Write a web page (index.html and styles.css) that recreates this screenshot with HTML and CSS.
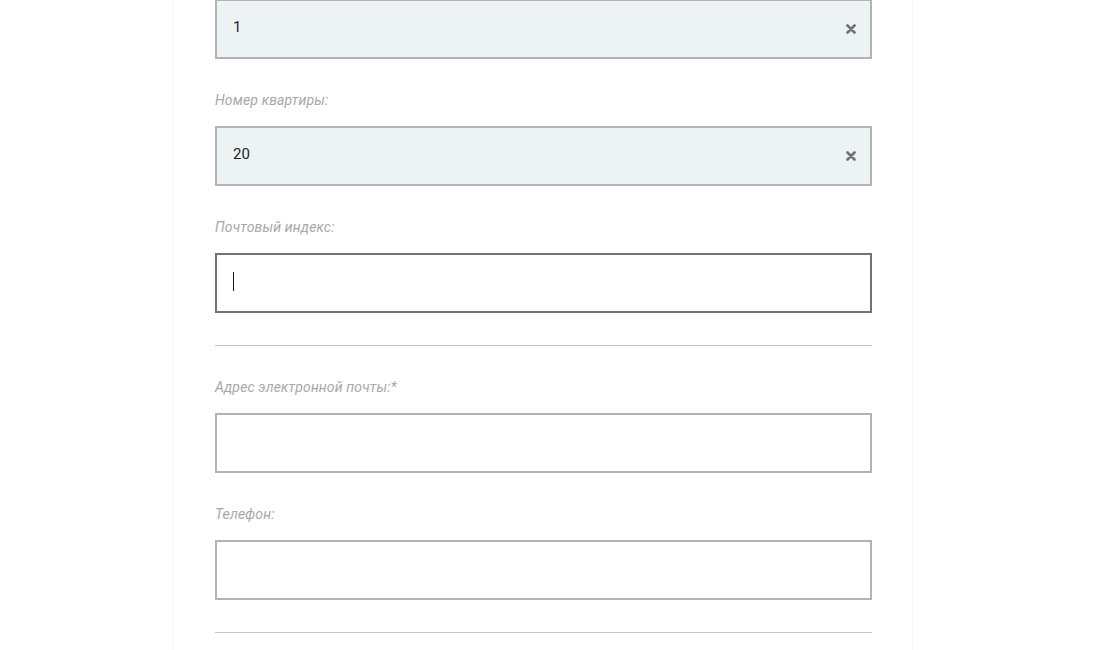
FILE: index.html
```html
<!DOCTYPE html>
<html lang="ru">
<head>
<meta charset="utf-8">
<link rel="stylesheet" href="styles.css">
</head>
<body>
<div class="card">
  <div class="field first">
    <div class="control filled">
      <input class="input" type="text" value="1">
      <span class="clear"><svg viewBox="0 0 10 10" width="10" height="10"><path d="M1.5 1.5 L8.5 8.5 M8.5 1.5 L1.5 8.5" stroke="#6e7174" stroke-width="2.6" stroke-linecap="round"/></svg></span>
    </div>
  </div>
  <div class="field">
    <label class="label">Номер квартиры:</label>
    <div class="control filled">
      <input class="input" type="text" value="20">
      <span class="clear"><svg viewBox="0 0 10 10" width="10" height="10"><path d="M1.5 1.5 L8.5 8.5 M8.5 1.5 L1.5 8.5" stroke="#6e7174" stroke-width="2.6" stroke-linecap="round"/></svg></span>
    </div>
  </div>
  <div class="field">
    <label class="label">Почтовый индекс:</label>
    <div class="control focused">
      <div class="input"><span class="caret"></span></div>
    </div>
  </div>
  <hr class="sep">
  <div class="field">
    <label class="label">Адрес электронной почты:*</label>
    <div class="control">
      <input class="input" type="text" value="">
    </div>
  </div>
  <div class="field">
    <label class="label">Телефон:</label>
    <div class="control">
      <input class="input" type="text" value="">
    </div>
  </div>
  <hr class="sep">
</div>
</body>
</html>
```
FILE: styles.css
```css
html, body {
  margin: 0;
  padding: 0;
  background: #ffffff;
  overflow: hidden;
}
body {
  font-family: "Roboto", "Liberation Sans", sans-serif;
  height: 650px;
}
.card {
  margin-left: 174px;
  width: 738px;
  margin-top: -1px;
  padding: 0 40px 40px 41px;
  box-sizing: border-box;
  background: #fff;
  box-shadow: 0 0 3px rgba(0, 0, 0, 0.09);
  min-height: 700px;
}
.field {
  margin-top: 33px;
}
.field.first {
  margin-top: 0;
}
.label {
  display: block;
  font-size: 14px;
  line-height: 16px;
  font-style: italic;
  font-weight: 400;
  letter-spacing: 0.15px;
  color: #a8a8a8;
  margin-bottom: 18px;
}
.control {
  position: relative;
}
.input {
  display: block;
  width: 100%;
  height: 60px;
  box-sizing: border-box;
  border: 2px solid #b3b3b3;
  background: #fff;
  padding: 0 40px 4px 16px;
  font-family: "Roboto", "Liberation Sans", sans-serif;
  font-size: 15px;
  color: #1e1e1e;
  outline: none;
  margin: 0;
}
.filled .input {
  background: #edf2f5;
}
.focused .input {
  border-color: #737373;
  display: flex;
  align-items: center;
}
.caret {
  display: block;
  width: 1px;
  height: 19px;
  background: #111;
}
.clear {
  position: absolute;
  right: 16px;
  top: 50%;
  width: 10px;
  height: 10px;
  margin-top: -5px;
  display: flex;
}
.sep {
  border: 0;
  border-top: 1px solid #c4c4c4;
  margin: 32px 0 0 0;
  height: 0;
}
```
